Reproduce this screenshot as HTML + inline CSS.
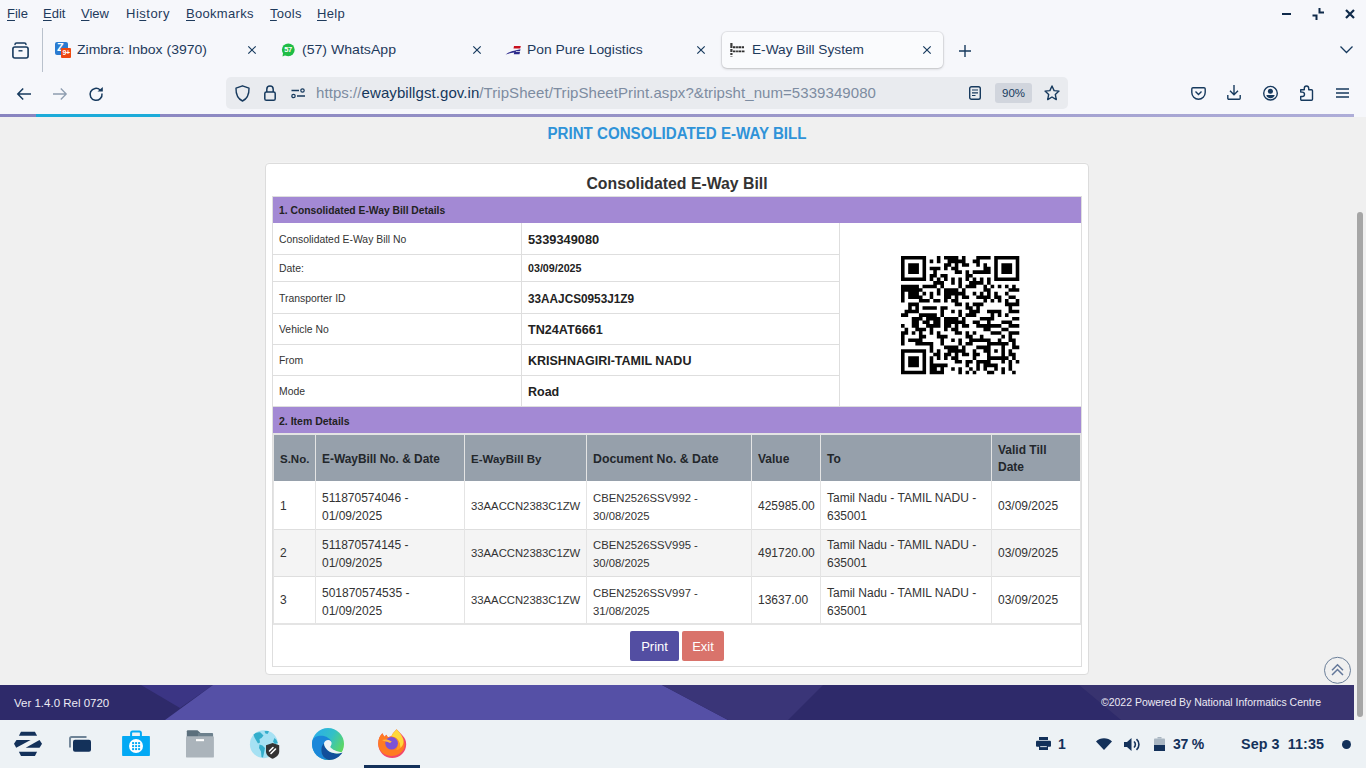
<!DOCTYPE html>
<html><head><meta charset="utf-8">
<style>
*{margin:0;padding:0;box-sizing:border-box}
html,body{width:1366px;height:768px;overflow:hidden;background:#f0f0f0;font-family:"Liberation Sans",sans-serif;position:relative}
.a{position:absolute}
#chrome{position:absolute;left:0;top:0;width:1366px;height:117px;background:#f6f7fb}
.mi{position:absolute;top:6px;font-size:13px;color:#1e3a5c;line-height:16px;white-space:nowrap}
.mi u{text-decoration:underline;text-underline-offset:2px}
.tabt{position:absolute;top:42px;font-size:13px;color:#1e3a5c;line-height:16px;white-space:nowrap}
svg{position:absolute;overflow:visible}
#pg{position:absolute;left:0;top:0;width:1354px;height:768px}
.lbl{position:absolute;left:279px;font-size:10.4px;line-height:12px;color:#333;white-space:nowrap}
.val{position:absolute;left:528px;font-weight:bold;line-height:14px;color:#222;white-space:nowrap}
.vl{position:absolute;top:435px;width:1px;height:188px;background:#e4e4e4}
.th{position:absolute;font-weight:bold;color:#23272b;line-height:14px;white-space:nowrap}
.td{position:absolute;font-size:12px;color:#333;line-height:14px;white-space:nowrap}
#footer{position:absolute;left:0;top:685px;width:1354px;height:35px;background:#2f2a67;overflow:hidden}
#taskbar{position:absolute;left:0;top:720px;width:1366px;height:48px;background:#edf2f5}
</style></head><body>
<div id="chrome">
  <div class="mi" style="left:7px"><u>F</u>ile</div>
  <div class="mi" style="left:43px"><u>E</u>dit</div>
  <div class="mi" style="left:81px"><u>V</u>iew</div>
  <div class="mi" style="left:126px;letter-spacing:0.5px">Hi<u>s</u>tory</div>
  <div class="mi" style="left:186px;letter-spacing:0.3px"><u>B</u>ookmarks</div>
  <div class="mi" style="left:270px;letter-spacing:0.3px"><u>T</u>ools</div>
  <div class="mi" style="left:317px;letter-spacing:0.3px"><u>H</u>elp</div>
  <!-- window controls -->
  <div class="a" style="left:1282px;top:13px;width:9px;height:2px;background:#0f2a4a"></div>
  <svg style="left:1311px;top:7px" width="14" height="14" viewBox="0 0 14 14"><path d="M1.5 8.5H5.5V13M8.5 1V5.5H13" fill="none" stroke="#0f2a4a" stroke-width="2"/></svg>
  <svg style="left:1345px;top:9px" width="10" height="10" viewBox="0 0 10 10"><path d="M1 1L9 9M9 1L1 9" fill="none" stroke="#0f2a4a" stroke-width="2.2"/></svg>
  <!-- tab bar -->
  <svg style="left:12px;top:42px" width="17" height="17" viewBox="0 0 17 17"><path d="M3 2.6Q3 1 4.6 1H12.4Q14 1 14 2.6" fill="none" stroke="#173a5e" stroke-width="1.5" stroke-linecap="round"/><rect x="0.9" y="5" width="15.2" height="11" rx="2" fill="none" stroke="#173a5e" stroke-width="1.6"/><path d="M6.5 8.8H10.5" stroke="#173a5e" stroke-width="1.4"/></svg>
  <div class="a" style="left:42px;top:28px;width:1px;height:44px;background:#b9c1cc"></div>
  <!-- tab 1 -->
  <div class="a" style="left:55px;top:42px;width:13px;height:13px;background:#2a7bd1;border-radius:2px"></div>
  <div class="a" style="left:57px;top:41px;font:bold 11px 'Liberation Sans';color:#fff;line-height:13px">Z</div>
  <div class="a" style="left:61px;top:48px;width:10px;height:10px;background:#ee4710;border-radius:1px;font:bold 7px 'Liberation Sans';color:#fff;line-height:10px;text-align:center;letter-spacing:-0.5px">9+</div>
  <div class="tabt" style="left:77px;font-size:13px;transform:scaleX(1.077);transform-origin:0 0">Zimbra: Inbox (3970)</div>
  <svg style="left:248px;top:46px" width="8" height="8" viewBox="0 0 8 8"><path d="M0.3 0.3L7.7 7.7M7.7 0.3L0.3 7.7" stroke="#173a5e" stroke-width="1.2"/></svg>
  <!-- tab 2 -->
  <svg style="left:281px;top:43px" width="14" height="14" viewBox="0 0 14 14"><circle cx="7.3" cy="6.8" r="6.4" fill="#1fbd45"/><path d="M1.5 13.5L2.2 9L5 12Z" fill="#1fbd45"/></svg>
  <div class="a" style="left:283px;top:45px;width:10px;font:bold 7.5px 'Liberation Sans';color:#fff;line-height:10px;text-align:center;letter-spacing:-0.3px">57</div>
  <div class="tabt" style="left:302px;font-size:13px;transform:scaleX(1.084);transform-origin:0 0">(57) WhatsApp</div>
  <svg style="left:473px;top:46px" width="8" height="8" viewBox="0 0 8 8"><path d="M0.3 0.3L7.7 7.7M7.7 0.3L0.3 7.7" stroke="#173a5e" stroke-width="1.2"/></svg>
  <!-- tab 3 -->
  <svg style="left:505px;top:45px" width="16" height="11" viewBox="0 0 16 11"><path d="M9 1H15.8L15.2 3.4H8.5Z" fill="#c8101e"/><path d="M0.5 9.5C3 7.5 6 6 15.5 4.2L15 6.2H11L10.8 7H15L14.5 9.2H8.8L9.2 7.4C6 7.8 3 8.6 0.5 9.5Z" fill="#2c2a8c"/></svg>
  <div class="tabt" style="left:527px;font-size:13px;transform:scaleX(1.067);transform-origin:0 0">Pon Pure Logistics</div>
  <svg style="left:697px;top:46px" width="8" height="8" viewBox="0 0 8 8"><path d="M0.3 0.3L7.7 7.7M7.7 0.3L0.3 7.7" stroke="#173a5e" stroke-width="1.2"/></svg>
  <!-- tab 4 active -->
  <div class="a" style="left:722px;top:32px;width:221px;height:36px;background:#fafbfd;border-radius:5px;box-shadow:0 0 0 1px rgba(0,0,0,0.06),0 1px 3px rgba(0,0,0,0.18)"></div>
  <svg style="left:724px;top:38px" width="28" height="24" viewBox="724 38 28 24"><path d="M731.4 43V56.5" stroke="#3a3a3a" stroke-width="2.2" stroke-dasharray="5 1 3 1 2 1"/><path d="M733 47.3H744.2M733 51.4H745" stroke="#2e2e2e" stroke-width="1.9" stroke-dasharray="2.5 0.6 1.8 0.5 3 0.6 2 0.5"/></svg>
  <div class="tabt" style="left:752px;font-size:13px;transform:scaleX(1.052);transform-origin:0 0">E-Way Bill System</div>
  <svg style="left:923px;top:46px" width="8" height="8" viewBox="0 0 8 8"><path d="M0.3 0.3L7.7 7.7M7.7 0.3L0.3 7.7" stroke="#173a5e" stroke-width="1.2"/></svg>
  <svg style="left:959px;top:45px" width="12" height="12" viewBox="0 0 12 12"><path d="M6 0V12M0 6H12" stroke="#173a5e" stroke-width="1.4"/></svg>
  <svg style="left:1340px;top:46px" width="13" height="8" viewBox="0 0 13 8"><path d="M0.5 0.5L6.5 6.5L12.5 0.5" fill="none" stroke="#173a5e" stroke-width="1.3"/></svg>
  <!-- nav bar -->
  <svg style="left:17px;top:88px" width="14" height="12" viewBox="0 0 14 12"><path d="M6.2 0.5L0.8 6L6.2 11.5M0.8 6H14" fill="none" stroke="#173a5e" stroke-width="1.5"/></svg>
  <svg style="left:53px;top:88px" width="14" height="12" viewBox="0 0 14 12"><path d="M7.8 0.5L13.2 6L7.8 11.5M13.2 6H0" fill="none" stroke="#8e9db0" stroke-width="1.3"/></svg>
  <svg style="left:89px;top:87px" width="15" height="15" viewBox="0 0 15 15"><path d="M13 6.5A6 6 0 1 1 11.2 3" fill="none" stroke="#173a5e" stroke-width="1.5"/><path d="M8.5 4.5L13.8 0V4.5Z" fill="#173a5e"/></svg>
  <div class="a" style="left:226px;top:77px;width:842px;height:32px;background:#e9ebef;border-radius:5px"></div>
  <svg style="left:235px;top:85px" width="15" height="17" viewBox="0 0 15 17"><path d="M7.5 0.8L14 3.2C14.2 9.5 11.5 14 7.5 16C3.5 14 0.8 9.5 1 3.2Z" fill="none" stroke="#173a5e" stroke-width="1.4" stroke-linejoin="round"/></svg>
  <svg style="left:264px;top:85px" width="12" height="16" viewBox="0 0 12 16"><path d="M2.8 7V4.2A3.2 3.2 0 0 1 9.2 4.2V7" fill="none" stroke="#173a5e" stroke-width="1.5"/><rect x="0.8" y="7" width="10.4" height="8.3" rx="1.6" fill="none" stroke="#173a5e" stroke-width="1.5"/></svg>
  <svg style="left:291px;top:88px" width="15" height="11" viewBox="0 0 15 11"><path d="M0.5 2.5H8M6 8H14" stroke="#173a5e" stroke-width="1.3"/><circle cx="11.5" cy="2.5" r="1.7" fill="none" stroke="#173a5e" stroke-width="1.2"/><circle cx="2.5" cy="8" r="1.7" fill="none" stroke="#173a5e" stroke-width="1.2"/></svg>
  <div class="a" style="left:316px;top:84px;font-size:15px;line-height:18px;white-space:nowrap;color:#7d8ca1;letter-spacing:0.07px">https://<span style="color:#15375c">ewaybillgst.gov.in</span>/TripSheet/TripSheetPrint.aspx?&amp;tripsht_num=5339349080</div>
  <svg style="left:969px;top:86px" width="12" height="14" viewBox="0 0 12 14"><rect x="0.7" y="0.7" width="10.6" height="12.6" rx="1.8" fill="none" stroke="#173a5e" stroke-width="1.4"/><path d="M3 4H9M3 6.8H9M3 9.5H6.5" stroke="#173a5e" stroke-width="1.2"/></svg>
  <div class="a" style="left:995px;top:83px;width:37px;height:20px;background:#d1d5dd;border-radius:3px;font-size:11.5px;line-height:20px;text-align:center;color:#173a5e">90%</div>
  <svg style="left:1044px;top:85px" width="16" height="16" viewBox="0 0 16 16"><path d="M8 1L10.1 5.6L15 6.1L11.3 9.4L12.3 14.6L8 12L3.7 14.6L4.7 9.4L1 6.1L5.9 5.6Z" fill="none" stroke="#173a5e" stroke-width="1.4" stroke-linejoin="round"/></svg>
  <svg style="left:1191px;top:87px" width="15" height="13" viewBox="0 0 15 13"><path d="M0.8 1.8A1.2 1.2 0 0 1 2 0.7H13A1.2 1.2 0 0 1 14.2 1.8V5.5A6.7 6.7 0 0 1 0.8 5.5Z" fill="none" stroke="#173a5e" stroke-width="1.4"/><path d="M4.5 4.5L7.5 7.5L10.5 4.5" fill="none" stroke="#173a5e" stroke-width="1.4"/></svg>
  <svg style="left:1227px;top:85px" width="14" height="15" viewBox="0 0 14 15"><path d="M7 0V9.5M3 5.8L7 9.8L11 5.8" fill="none" stroke="#173a5e" stroke-width="1.4"/><path d="M0.8 10V13.2A1 1 0 0 0 1.8 14.2H12.2A1 1 0 0 0 13.2 13.2V10" fill="none" stroke="#173a5e" stroke-width="1.4"/></svg>
  <svg style="left:1263px;top:86px" width="15" height="15" viewBox="0 0 15 15"><circle cx="7.5" cy="7.2" r="6.8" fill="none" stroke="#173a5e" stroke-width="1.4"/><circle cx="7.4" cy="5.3" r="2.5" fill="#173a5e"/><path d="M3.3 9H11.7C11.3 11 9.8 12.2 7.5 12.2C5.2 12.2 3.7 11 3.3 9Z" fill="#173a5e"/></svg>
  <svg style="left:1300px;top:85px" width="14" height="16" viewBox="0 0 14 16"><path d="M0.7 4.8H4.3V3.2A2.2 2.2 0 0 1 8.7 3.2V4.8H11.5A1 1 0 0 1 12.5 5.8V14.3A1 1 0 0 1 11.5 15.3H1.7A1 1 0 0 1 0.7 14.3V11.5H2.3A2.2 2.2 0 0 0 2.3 7.1H0.7Z" fill="none" stroke="#173a5e" stroke-width="1.4" stroke-linejoin="round"/></svg>
  <svg style="left:1336px;top:88px" width="13" height="10" viewBox="0 0 13 10"><path d="M0 1H13M0 5H13M0 9H13" stroke="#173a5e" stroke-width="1.4"/></svg>
  <!-- progress line -->
  <div class="a" style="left:0;top:114px;width:1354px;height:3px;background:linear-gradient(90deg,#8884c0,#9894c8 50%,#aeadd8)"></div>
  <div class="a" style="left:36px;top:114px;width:124px;height:3px;background:#1cabd9"></div>
</div>
<div id="pg">
  <div class="a" style="left:0;top:125px;width:1354px;text-align:center;font:bold 16.8px 'Liberation Sans';color:#2f93d8;line-height:17px;transform:scaleX(0.9);transform-origin:677px 0">PRINT CONSOLIDATED E-WAY BILL</div>
  <div class="a" style="left:265px;top:163px;width:824px;height:512px;background:#fff;border:1px solid #dcdcdc;border-radius:4px;box-shadow:0 -1px 0 #f3f3f3"></div>
  <div class="a" style="left:265px;top:176px;width:824px;text-align:center;font:bold 15.8px 'Liberation Sans';color:#333;line-height:16px">Consolidated E-Way Bill</div>
  <!-- outer table border -->
  <div class="a" style="left:272px;top:196px;width:810px;height:471px;border:1px solid #dedede"></div>
  <!-- purple header 1 -->
  <div class="a" style="left:273px;top:197px;width:808px;height:26px;background:#a389d4"></div>
  <div class="a" style="left:279px;top:205px;font:bold 10.3px 'Liberation Sans';color:#222;line-height:12px">1. Consolidated E-Way Bill Details</div>
  <!-- detail grid lines -->
  <div class="a" style="left:273px;top:254px;width:566px;height:1px;background:#dedede"></div>
  <div class="a" style="left:273px;top:281px;width:566px;height:1px;background:#dedede"></div>
  <div class="a" style="left:273px;top:313px;width:566px;height:1px;background:#dedede"></div>
  <div class="a" style="left:273px;top:344px;width:566px;height:1px;background:#dedede"></div>
  <div class="a" style="left:273px;top:375px;width:566px;height:1px;background:#dedede"></div>
  <div class="a" style="left:273px;top:406px;width:808px;height:1px;background:#dedede"></div>
  <div class="a" style="left:521px;top:223px;width:1px;height:183px;background:#dedede"></div>
  <div class="a" style="left:839px;top:223px;width:1px;height:183px;background:#dedede"></div>
  <!-- detail labels -->
  <div class="lbl" style="top:234px">Consolidated E-Way Bill No</div>
  <div class="lbl" style="top:263px">Date:</div>
  <div class="lbl" style="top:293px">Transporter ID</div>
  <div class="lbl" style="top:324px">Vehicle No</div>
  <div class="lbl" style="top:355px">From</div>
  <div class="lbl" style="top:386px">Mode</div>
  <div class="val" style="top:233px;font-size:12.8px">5339349080</div>
  <div class="val" style="top:261px;font-size:10.7px">03/09/2025</div>
  <div class="val" style="top:292px;font-size:12.4px;transform:scaleX(0.95);transform-origin:0 0">33AAJCS0953J1Z9</div>
  <div class="val" style="top:323px;font-size:12.6px">TN24AT6661</div>
  <div class="val" style="top:354px;font-size:12.5px">KRISHNAGIRI-TAMIL NADU</div>
  <div class="val" style="top:385px;font-size:12.5px">Road</div>
  <!-- QR placeholder -->
  <svg style="left:901px;top:255.8px" width="118.3" height="118.3" viewBox="0 0 33 33"><path d="M0 0h7v1h-7zM10 0h1v1h-1zM12 0h4v1h-4zM17 0h1v1h-1zM21 0h4v1h-4zM26 0h7v1h-7zM0 1h1v1h-1zM6 1h1v1h-1zM8 1h1v1h-1zM10 1h1v1h-1zM13 1h5v1h-5zM20 1h2v1h-2zM26 1h1v1h-1zM32 1h1v1h-1zM0 2h1v1h-1zM2 2h3v1h-3zM6 2h1v1h-1zM12 2h2v1h-2zM15 2h1v1h-1zM17 2h2v1h-2zM21 2h1v1h-1zM23 2h1v1h-1zM26 2h1v1h-1zM28 2h3v1h-3zM32 2h1v1h-1zM0 3h1v1h-1zM2 3h3v1h-3zM6 3h1v1h-1zM8 3h3v1h-3zM12 3h1v1h-1zM14 3h2v1h-2zM23 3h2v1h-2zM26 3h1v1h-1zM28 3h3v1h-3zM32 3h1v1h-1zM0 4h1v1h-1zM2 4h3v1h-3zM6 4h1v1h-1zM9 4h1v1h-1zM15 4h2v1h-2zM18 4h1v1h-1zM20 4h5v1h-5zM26 4h1v1h-1zM28 4h3v1h-3zM32 4h1v1h-1zM0 5h1v1h-1zM6 5h1v1h-1zM8 5h2v1h-2zM11 5h2v1h-2zM18 5h2v1h-2zM26 5h1v1h-1zM32 5h1v1h-1zM0 6h7v1h-7zM8 6h1v1h-1zM10 6h1v1h-1zM12 6h1v1h-1zM14 6h1v1h-1zM16 6h1v1h-1zM18 6h1v1h-1zM20 6h1v1h-1zM22 6h1v1h-1zM24 6h1v1h-1zM26 6h7v1h-7zM9 7h3v1h-3zM14 7h1v1h-1zM16 7h1v1h-1zM19 7h4v1h-4zM24 7h1v1h-1zM0 8h5v1h-5zM6 8h4v1h-4zM11 8h1v1h-1zM16 8h1v1h-1zM18 8h3v1h-3zM23 8h1v1h-1zM25 8h1v1h-1zM27 8h1v1h-1zM29 8h1v1h-1zM31 8h1v1h-1zM0 9h6v1h-6zM10 9h1v1h-1zM12 9h4v1h-4zM17 9h1v1h-1zM23 9h2v1h-2zM30 9h3v1h-3zM0 10h1v1h-1zM2 10h3v1h-3zM6 10h1v1h-1zM8 10h1v1h-1zM10 10h1v1h-1zM12 10h6v1h-6zM20 10h1v1h-1zM22 10h1v1h-1zM24 10h1v1h-1zM26 10h1v1h-1zM29 10h1v1h-1zM0 11h1v1h-1zM2 11h4v1h-4zM8 11h1v1h-1zM12 11h2v1h-2zM15 11h1v1h-1zM17 11h2v1h-2zM21 11h4v1h-4zM26 11h2v1h-2zM30 11h2v1h-2zM0 12h1v1h-1zM5 12h3v1h-3zM9 12h2v1h-2zM12 12h1v1h-1zM14 12h2v1h-2zM23 12h1v1h-1zM25 12h1v1h-1zM27 12h1v1h-1zM29 12h1v1h-1zM32 12h1v1h-1zM2 13h3v1h-3zM15 13h2v1h-2zM18 13h1v1h-1zM20 13h3v1h-3zM29 13h4v1h-4zM2 14h1v1h-1zM4 14h1v1h-1zM6 14h4v1h-4zM11 14h2v1h-2zM18 14h2v1h-2zM21 14h1v1h-1zM30 14h1v1h-1zM1 15h4v1h-4zM11 15h1v1h-1zM14 15h1v1h-1zM16 15h1v1h-1zM19 15h3v1h-3zM24 15h4v1h-4zM30 15h3v1h-3zM0 16h2v1h-2zM5 16h5v1h-5zM11 16h1v1h-1zM16 16h1v1h-1zM18 16h3v1h-3zM25 16h1v1h-1zM27 16h1v1h-1zM29 16h1v1h-1zM3 17h3v1h-3zM7 17h4v1h-4zM12 17h4v1h-4zM17 17h1v1h-1zM22 17h4v1h-4zM31 17h2v1h-2zM3 18h2v1h-2zM6 18h2v1h-2zM9 18h2v1h-2zM12 18h6v1h-6zM20 18h2v1h-2zM24 18h1v1h-1zM28 18h3v1h-3zM0 19h1v1h-1zM3 19h2v1h-2zM7 19h4v1h-4zM12 19h2v1h-2zM15 19h1v1h-1zM17 19h2v1h-2zM21 19h7v1h-7zM30 19h3v1h-3zM1 20h1v1h-1zM4 20h3v1h-3zM8 20h1v1h-1zM12 20h1v1h-1zM14 20h2v1h-2zM23 20h2v1h-2zM28 20h2v1h-2zM0 21h2v1h-2zM3 21h1v1h-1zM5 21h1v1h-1zM8 21h1v1h-1zM10 21h1v1h-1zM15 21h2v1h-2zM18 21h1v1h-1zM20 21h1v1h-1zM25 21h3v1h-3zM30 21h3v1h-3zM0 22h1v1h-1zM5 22h2v1h-2zM10 22h3v1h-3zM18 22h2v1h-2zM22 22h1v1h-1zM28 22h1v1h-1zM30 22h1v1h-1zM0 23h1v1h-1zM2 23h4v1h-4zM11 23h1v1h-1zM14 23h1v1h-1zM16 23h1v1h-1zM19 23h6v1h-6zM27 23h1v1h-1zM30 23h2v1h-2zM0 24h1v1h-1zM4 24h5v1h-5zM11 24h1v1h-1zM16 24h1v1h-1zM18 24h2v1h-2zM24 24h6v1h-6zM31 24h1v1h-1zM8 25h1v1h-1zM12 25h4v1h-4zM17 25h1v1h-1zM21 25h4v1h-4zM28 25h1v1h-1zM31 25h2v1h-2zM0 26h7v1h-7zM8 26h1v1h-1zM10 26h1v1h-1zM13 26h5v1h-5zM20 26h1v1h-1zM23 26h2v1h-2zM26 26h1v1h-1zM28 26h1v1h-1zM30 26h1v1h-1zM0 27h1v1h-1zM6 27h1v1h-1zM9 27h2v1h-2zM12 27h2v1h-2zM15 27h1v1h-1zM17 27h2v1h-2zM20 27h2v1h-2zM24 27h1v1h-1zM28 27h1v1h-1zM30 27h2v1h-2zM0 28h1v1h-1zM2 28h3v1h-3zM6 28h1v1h-1zM8 28h1v1h-1zM10 28h1v1h-1zM12 28h1v1h-1zM14 28h2v1h-2zM20 28h1v1h-1zM24 28h6v1h-6zM31 28h1v1h-1zM0 29h1v1h-1zM2 29h3v1h-3zM6 29h1v1h-1zM8 29h1v1h-1zM15 29h2v1h-2zM18 29h2v1h-2zM21 29h4v1h-4zM28 29h1v1h-1zM30 29h1v1h-1zM32 29h1v1h-1zM0 30h1v1h-1zM2 30h3v1h-3zM6 30h1v1h-1zM8 30h5v1h-5zM18 30h1v1h-1zM21 30h1v1h-1zM23 30h4v1h-4zM30 30h1v1h-1zM0 31h1v1h-1zM6 31h1v1h-1zM8 31h2v1h-2zM11 31h1v1h-1zM14 31h1v1h-1zM16 31h1v1h-1zM19 31h1v1h-1zM21 31h1v1h-1zM23 31h1v1h-1zM26 31h1v1h-1zM28 31h1v1h-1zM30 31h1v1h-1zM0 32h7v1h-7zM8 32h4v1h-4zM16 32h1v1h-1zM18 32h1v1h-1zM20 32h1v1h-1zM24 32h2v1h-2zM28 32h1v1h-1zM31 32h1v1h-1z" fill="#000"/></svg>
  <!-- purple header 2 -->
  <div class="a" style="left:273px;top:407px;width:808px;height:26px;background:#a389d4"></div>
  <div class="a" style="left:279px;top:415px;font:bold 10.5px 'Liberation Sans';color:#222;line-height:12px">2. Item Details</div>
  <!-- item table -->
  <div class="a" style="left:273px;top:433px;width:808px;height:192px;background:#e4e4e4"></div>
  <div class="a" style="left:274px;top:435px;width:806px;height:46px;background:#96a0ab"></div>
  <div class="a" style="left:274px;top:481px;width:806px;height:48px;background:#fff"></div>
  <div class="a" style="left:274px;top:530px;width:806px;height:46px;background:#f4f4f4"></div>
  <div class="a" style="left:274px;top:577px;width:806px;height:46px;background:#fff"></div>
  <div class="a" style="left:274px;top:529px;width:806px;height:1px;background:#dedede"></div>
  <div class="a" style="left:274px;top:576px;width:806px;height:1px;background:#dedede"></div>
  <div class="vl" style="left:315px"></div>
  <div class="vl" style="left:464px"></div>
  <div class="vl" style="left:586px"></div>
  <div class="vl" style="left:751px"></div>
  <div class="vl" style="left:820px"></div>
  <div class="vl" style="left:991px"></div>
  <!-- header texts -->
  <div class="th" style="left:280px;top:452px;font-size:11.5px">S.No.</div>
  <div class="th" style="left:322px;top:452px;font-size:11.9px">E-WayBill No. &amp; Date</div>
  <div class="th" style="left:471px;top:452px;font-size:11.5px">E-WayBill By</div>
  <div class="th" style="left:593px;top:452px;font-size:12.3px">Document No. &amp; Date</div>
  <div class="th" style="left:758px;top:452px;font-size:12px">Value</div>
  <div class="th" style="left:827px;top:452px;font-size:12px">To</div>
  <div class="th" style="left:998px;top:442px;font-size:12px;line-height:17px">Valid Till<br>Date</div>
  <!-- rows -->
  <div class="td" style="left:280px;top:499px">1</div>
  <div class="td" style="left:322px;top:490px;line-height:17.5px">511870574046 -<br>01/09/2025</div>
  <div class="td" style="left:471px;top:499px;font-size:11.3px">33AACCN2383C1ZW</div>
  <div class="td" style="left:593px;top:490px;line-height:17.5px;font-size:11.3px">CBEN2526SSV992 -<br>30/08/2025</div>
  <div class="td" style="left:758px;top:499px">425985.00</div>
  <div class="td" style="left:827px;top:490px;line-height:17.5px">Tamil Nadu - TAMIL NADU -<br>635001</div>
  <div class="td" style="left:998px;top:499px">03/09/2025</div>

  <div class="td" style="left:280px;top:546px">2</div>
  <div class="td" style="left:322px;top:537px;line-height:17.5px">511870574145 -<br>01/09/2025</div>
  <div class="td" style="left:471px;top:546px;font-size:11.3px">33AACCN2383C1ZW</div>
  <div class="td" style="left:593px;top:537px;line-height:17.5px;font-size:11.3px">CBEN2526SSV995 -<br>30/08/2025</div>
  <div class="td" style="left:758px;top:546px">491720.00</div>
  <div class="td" style="left:827px;top:537px;line-height:17.5px">Tamil Nadu - TAMIL NADU -<br>635001</div>
  <div class="td" style="left:998px;top:546px">03/09/2025</div>

  <div class="td" style="left:280px;top:593px">3</div>
  <div class="td" style="left:322px;top:585px;line-height:17.5px">501870574535 -<br>01/09/2025</div>
  <div class="td" style="left:471px;top:593px;font-size:11.3px">33AACCN2383C1ZW</div>
  <div class="td" style="left:593px;top:585px;line-height:17.5px;font-size:11.3px">CBEN2526SSV997 -<br>31/08/2025</div>
  <div class="td" style="left:758px;top:593px">13637.00</div>
  <div class="td" style="left:827px;top:585px;line-height:17.5px">Tamil Nadu - TAMIL NADU -<br>635001</div>
  <div class="td" style="left:998px;top:593px">03/09/2025</div>
  <!-- buttons -->
  <div class="a" style="left:630px;top:631px;width:49px;height:30px;background:#534ea2;border-radius:2px;color:#fff;font-size:13px;line-height:32px;text-align:center">Print</div>
  <div class="a" style="left:682px;top:631px;width:42px;height:30px;background:#d9736b;border-radius:2px;color:#fff;font-size:13px;line-height:32px;text-align:center">Exit</div>
  <!-- scroll to top -->
  <svg style="left:1324px;top:657px" width="28" height="28" viewBox="0 0 28 28"><circle cx="13.5" cy="13.3" r="13" fill="none" stroke="#6b7f99" stroke-width="1"/><path d="M8 13.2L13.5 7.8L19 13.2M8 18L13.5 12.5L19 18" fill="none" stroke="#64789a" stroke-width="1.5"/></svg>
</div>
<!-- scrollbar -->
<div class="a" style="left:1354px;top:117px;width:12px;height:603px;background:#f0f0f0"></div>
<div class="a" style="left:1357px;top:212px;width:6px;height:505px;background:#a6a6a6;border-radius:3px"></div>
<div id="footer">
  <svg style="left:0;top:0" width="1354" height="35" viewBox="0 0 1354 35">
    <rect width="1354" height="35" fill="#2e2a6a"/>
    <polygon points="141,0 213,0 180,23" fill="#3b3584"/>
    <polygon points="213,0 662,0 728,35 165,35" fill="#5550a6"/>
    <polygon points="662,0 823,0 788,35 728,35" fill="#3a3578"/>
    <polygon points="1079,0 1354,0 1354,35 1121,35" fill="#38336f"/>
  </svg>
  <div class="a" style="left:14px;top:11px;font-size:11.5px;line-height:14px;color:#eceaf4;white-space:nowrap">Ver 1.4.0 Rel 0720</div>
  <div class="a" style="left:1101px;top:10px;font-size:11.5px;line-height:14px;color:#eceaf4;white-space:nowrap;transform:scaleX(0.91);transform-origin:0 0">©2022 Powered By National Informatics Centre</div>
</div>
<div id="taskbar">
  <!-- zorin -->
  <svg style="left:0;top:0" width="100" height="48" viewBox="0 720 100 48">
    <polygon points="21,731.8 34.9,731.8 37.1,735.8 18.9,735.8" fill="#13315a"/>
    <polygon points="18.9,751.8 37.1,751.8 34.9,756.1 21,756.1" fill="#13315a"/>
    <polygon points="16.5,740.1 30.6,740.1 16.2,747.8 14,743.8" fill="#13315a"/>
    <polygon points="39.5,740.1 42,743.8 39.5,747.8 25.7,747.8" fill="#13315a"/>
    <path d="M70 747.5V738.6A1.6 1.6 0 0 1 71.6 737H86.5" fill="none" stroke="#6f8497" stroke-width="1.9"/>
    <rect x="73" y="739.8" width="18" height="12" rx="2" fill="#13315a"/>
  </svg>
  <!-- store + files -->
  <svg style="left:100px;top:0" width="130" height="48" viewBox="100 720 130 48">
    <path d="M131.1 736V733A1.5 1.5 0 0 1 132.6 731.5H139.4A1.5 1.5 0 0 1 140.9 733V736" fill="none" stroke="#03a9f4" stroke-width="2"/>
    <rect x="122.1" y="735.9" width="27.8" height="20.2" rx="0.8" fill="#03a9f4"/>
    <circle cx="136" cy="746" r="7" fill="#fff"/>
    <g fill="#03a9f4"><rect x="132.1" y="742.1" width="2" height="2"/><rect x="135.1" y="742.1" width="2" height="2"/><rect x="138.1" y="742.1" width="2" height="2"/><rect x="132.1" y="745.1" width="2" height="2"/><rect x="135.1" y="745.1" width="2" height="2"/><rect x="138.1" y="745.1" width="2" height="2"/><rect x="132.1" y="748.1" width="2" height="2"/><rect x="135.1" y="748.1" width="2" height="2"/><rect x="138.1" y="748.1" width="2" height="2"/></g>
    <path d="M186.8 731.2A1 1 0 0 1 187.8 730.2H197.5L200.5 733V737H186.8Z" fill="#5b6f7c"/>
    <path d="M197.9 732.9H212.1A1 1 0 0 1 213.1 733.9V737H197.9Z" fill="#6d818d"/>
    <rect x="186" y="736.3" width="27.9" height="21.3" rx="1.2" fill="#abb4bb"/>
    <rect x="196" y="739.1" width="8" height="2.1" fill="#fff"/>
  </svg>
  <!-- globe -->
  <svg style="left:240px;top:0" width="50" height="48" viewBox="240 720 50 48">
    <circle cx="263.9" cy="744.2" r="14" fill="#a6e1f3"/>
    <path d="M253.5 734.5C255.5 733 258 732 260.5 732.5L263.5 735.5L261.5 738L259.5 739L260 742.5L258 743.5L256.5 741L254.5 737.5Z" fill="#34aecb"/>
    <path d="M264.5 731.5C266 730.8 268 731 269 731.5L267.5 734L265.5 733.5Z" fill="#34aecb"/>
    <path d="M259.5 744.5L262.5 745.5L265 748L264 753L263 757.5L261.5 757L261 751.5L259 748Z" fill="#34aecb"/>
    <path d="M274.5 738L276.5 740L277.8 743L275 744L273 741.5Z" fill="#34aecb"/>
    <path d="M266 745.2L272.6 743.1L279.2 745.2V751.5C279.2 755 276 757.5 272.6 758.8C269.2 757.5 266 755 266 751.5Z" fill="#333"/>
    <path d="M269.5 751L273 747.5M271 753.5L275.5 749" stroke="#fff" stroke-width="1.6" stroke-linecap="round"/>
  </svg>
  <!-- edge -->
  <svg style="left:312px;top:8px" width="32" height="32" viewBox="0 0 32 32"><defs><linearGradient id="eg1" x1="0" y1="0.2" x2="1" y2="0.75"><stop offset="0" stop-color="#2aaeea"/><stop offset="0.5" stop-color="#33c0c6"/><stop offset="1" stop-color="#66dc4e"/></linearGradient></defs>
    <circle cx="16" cy="16" r="16" fill="url(#eg1)"/>
    <path d="M0.4 12.5C2 9 5.5 7.8 9 7.8C13 7.8 17 9.5 19.6 13.5L12 15.5C10.5 17.5 9.3 20 9.4 23C9.6 27.5 12.5 30.5 16.8 32.1C7.5 32.2 0 25 0 16C0 14.8 0.1 13.6 0.4 12.5Z" fill="#1b87d9"/>
    <path d="M12 15.5C10 17 9.3 19.5 9.3 22C9.3 27.5 12.5 31 17 32C23 32 28 28.5 30.5 24.5C27.5 25.5 24 25.8 20.5 24.8C16 23.5 12.5 20 12 15.5Z" fill="#114f9b"/>
    <path d="M12 15.5C12.3 13.3 14 12 16.2 12C18.3 12 19.7 13.3 19.6 15.2C19.5 16.8 18.8 18 18.2 19C20.5 21.7 24 23.5 30.5 24.2L30.5 24.5C27.5 25.5 24 25.8 20.5 24.8C16 23.5 12.5 20 12 15.5Z" fill="#eef3f6"/>
  </svg>
  <!-- firefox -->
  <svg style="left:374px;top:6px" width="36" height="36" viewBox="0 0 36 36">
    <path d="M4.2 18C4.2 13 6 9.5 8.4 7.3L10.3 10.8L12.5 8.7L13.8 11.2C15 10.8 16.5 10.5 17.3 10.5C18.5 7.5 20.5 5.5 22.5 3.3C24.5 5.5 27 7.5 28.5 9.5C31 12 32.2 15 32.2 18.2C32.2 26 26 32 18.2 32C10.5 32 4.2 25.8 4.2 18Z" fill="#f2476b"/>
    <path d="M4.2 17.5C4.2 13 6 9.5 8.4 7.3L10.3 10.8L12.5 8.7L13.8 11.2C15 10.8 16.5 10.5 17.3 10.5L22 9L29 14C30.5 16 30.8 18 30.6 19.5C30 25.5 24.5 30 17.6 30C10.2 30 4.2 24.5 4.2 17.5Z" fill="#ff7b22"/>
    <path d="M17.3 10.5C18.5 7.5 20.5 5.5 22.5 3.3C25 6 28 9 29.2 13C30.2 16.5 29 20 26.2 22C26.5 17.5 24.5 13.5 21 11.5C19.5 10.7 18.3 10.5 17.3 10.5Z" fill="#ffd83b"/>
    <path d="M21 11.5C24.5 13.5 26.5 17.5 26.2 22C25 23.5 23.5 24 22 24C24 21.5 24.3 16.5 21 12.5Z" fill="#ff9a1f"/>
    <circle cx="17.6" cy="17.3" r="6.3" fill="#7c52d6"/>
    <path d="M8 14C10.5 13 14.5 13 17.8 15.5L16 17C13 15.5 10.5 15.5 8 14Z" fill="#ffb23a"/>
  </svg>
  <div class="a" style="left:364px;top:45px;width:56px;height:3px;background:#13315a"></div>
  <!-- tray -->
  <svg style="left:1036px;top:17px" width="15" height="13" viewBox="0 0 15 13"><rect x="3" y="0" width="9" height="3" fill="#13315a"/><rect x="0" y="3.8" width="15" height="6" rx="1" fill="#13315a"/><rect x="3" y="8" width="9" height="5" fill="#13315a"/><rect x="4.2" y="9.2" width="6.6" height="0.9" fill="#edf2f5"/></svg>
  <div class="a" style="left:1058px;top:16px;font:bold 14px 'Liberation Sans';line-height:16px;color:#13315a">1</div>
  <svg style="left:1096px;top:18px" width="16" height="12" viewBox="0 0 16 12"><path d="M0 3.5A11.5 11.5 0 0 1 16 3.5L8 12Z" fill="#13315a"/></svg>
  <svg style="left:1124px;top:18px" width="16" height="13" viewBox="0 0 16 13"><path d="M0 4H3L7.5 0V13L3 9H0Z" fill="#13315a"/><path d="M10 3.5A4 4 0 0 1 10 9.5M12.5 1.2A7 7 0 0 1 12.5 11.8" fill="none" stroke="#13315a" stroke-width="1.6"/></svg>
  <svg style="left:1154px;top:17px" width="11" height="14" viewBox="0 0 11 14"><rect x="3.5" y="0" width="4" height="1.5" fill="#a9b6c2"/><rect x="0" y="1.5" width="11" height="12.5" rx="0.8" fill="#a9b6c2"/><rect x="0" y="8" width="11" height="6" fill="#13315a"/></svg>
  <div class="a" style="left:1173px;top:16px;font:bold 14px 'Liberation Sans';line-height:16px;color:#13315a;letter-spacing:-0.2px">37 %</div>
  <div class="a" style="left:1241px;top:16px;font:bold 14.3px 'Liberation Sans';line-height:16px;color:#13315a;white-space:nowrap;letter-spacing:0.1px">Sep 3&nbsp; 11:35</div>
  <div class="a" style="left:1342px;top:20px;width:9px;height:9px;border-radius:50%;background:#13315a"></div>
</div>
</body></html>
